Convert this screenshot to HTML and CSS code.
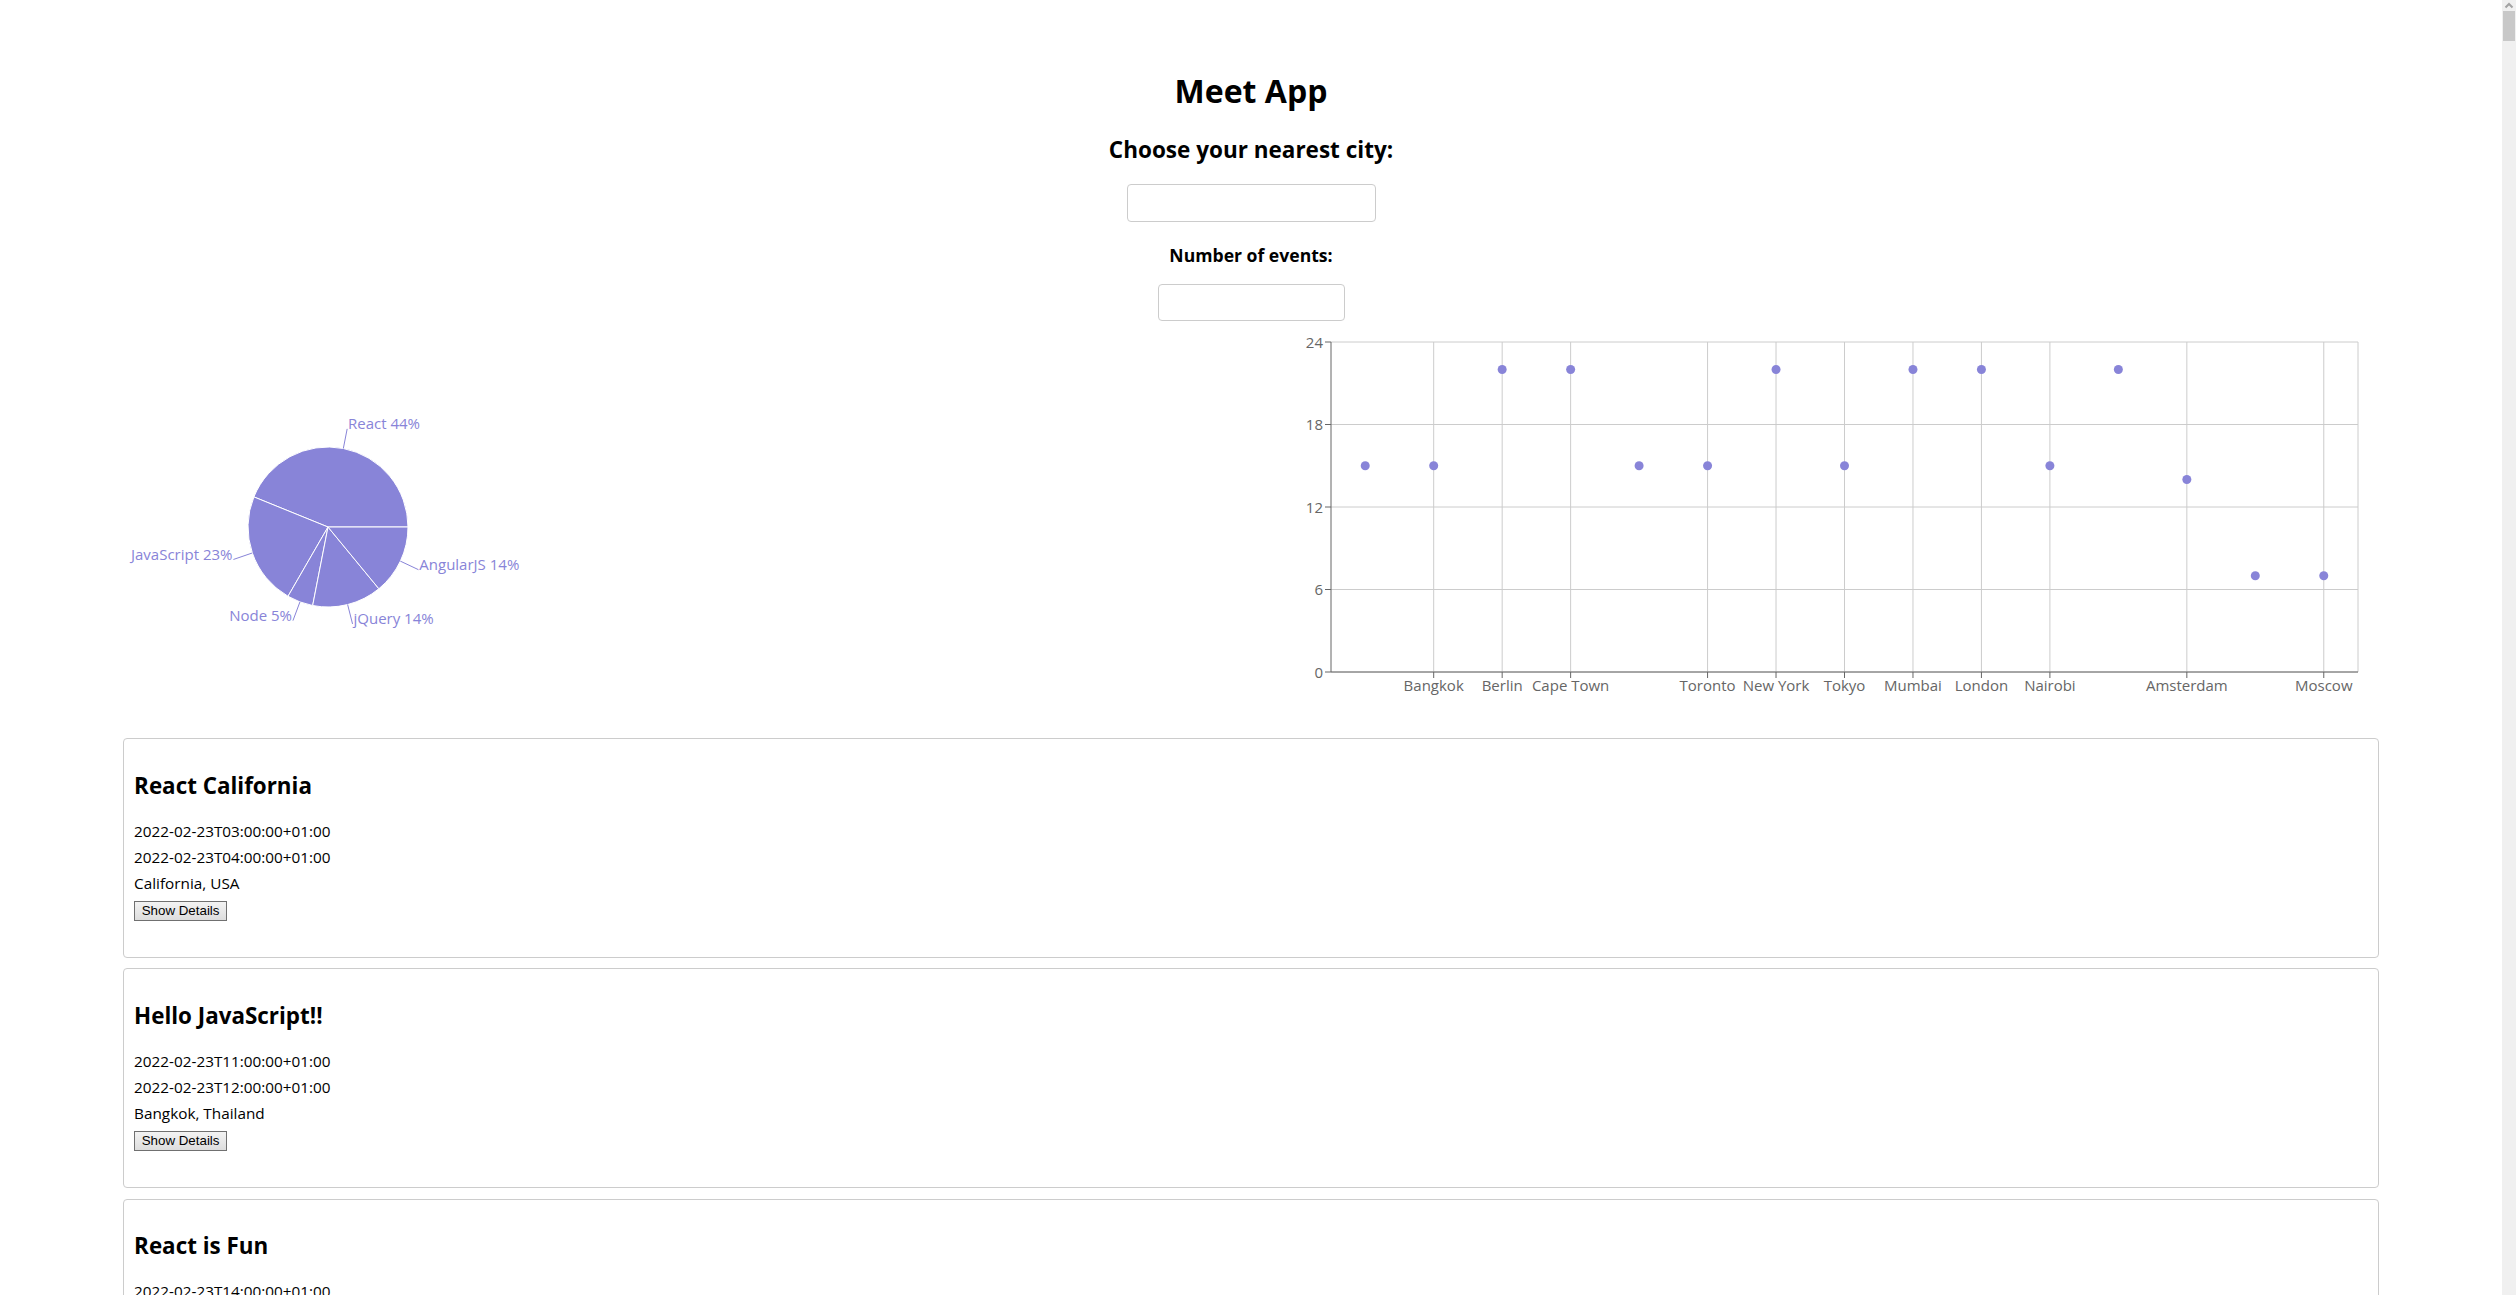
FILE: index.html
```
<!DOCTYPE html>
<html lang="en">
<head>
<meta charset="utf-8">
<title>Meet App</title>
<link rel="stylesheet" href="styles.css">
</head>
<body>
<div class="app">
  <h1 class="title">Meet App</h1>
  <div class="city-search">
    <h2 class="city-label">Choose your nearest city:</h2>
    <input class="city-input" type="text">
  </div>
  <div class="number-of-events">
    <h3 class="noe-label">Number of events:</h3>
    <input class="noe-input" type="text">
  </div>
  <div class="data-vis">
    <div class="pie-col">
      <svg class="pie" width="420" height="400" viewBox="0 0 420 400">
        <g class="slices">
          <path d="M205,205 L285,205 A80,80 0 0 0 130.88,174.90 Z"/>
          <path d="M205,205 L130.88,174.90 A80,80 0 0 0 165,274.28 Z"/>
          <path d="M205,205 L165,274.28 A80,80 0 0 0 189.66,283.52 Z"/>
          <path d="M205,205 L189.66,283.52 A80,80 0 0 0 255.86,266.75 Z"/>
          <path d="M205,205 L255.86,266.75 A80,80 0 0 0 285,205 Z"/>
        </g>
        <g class="label-lines">
          <line x1="220.34" y1="126.48" x2="224.17" y2="106.86"/>
          <line x1="129.33" y1="230.98" x2="110.42" y2="237.47"/>
          <line x1="176.95" y1="279.92" x2="169.94" y2="298.65"/>
          <line x1="224.64" y1="282.55" x2="229.55" y2="301.94"/>
          <line x1="277.35" y1="239.14" x2="295.44" y2="247.68"/>
        </g>
        <g class="pie-labels">
          <text x="225" y="106.9" text-anchor="start">React 44%</text>
          <text x="109.5" y="237.5" text-anchor="end">JavaScript 23%</text>
          <text x="169" y="298.7" text-anchor="end">Node 5%</text>
          <text x="230.5" y="301.9" text-anchor="start">jQuery 14%</text>
          <text x="296.3" y="247.7" text-anchor="start">AngularJS 14%</text>
        </g>
      </svg>
    </div>
    <div class="scatter-col">
      <svg class="scatter" width="1127" height="400" viewBox="0 0 1127 400">
        <g class="grid">
          <line x1="80" y1="20" x2="1107" y2="20"/>
          <line x1="80" y1="102.5" x2="1107" y2="102.5"/>
          <line x1="80" y1="185" x2="1107" y2="185"/>
          <line x1="80" y1="267.5" x2="1107" y2="267.5"/>
          <line x1="80" y1="350" x2="1107" y2="350"/>
          <line x1="182.7" y1="20" x2="182.7" y2="350"/>
          <line x1="251.17" y1="20" x2="251.17" y2="350"/>
          <line x1="319.63" y1="20" x2="319.63" y2="350"/>
          <line x1="456.57" y1="20" x2="456.57" y2="350"/>
          <line x1="525.03" y1="20" x2="525.03" y2="350"/>
          <line x1="593.5" y1="20" x2="593.5" y2="350"/>
          <line x1="661.97" y1="20" x2="661.97" y2="350"/>
          <line x1="730.43" y1="20" x2="730.43" y2="350"/>
          <line x1="798.9" y1="20" x2="798.9" y2="350"/>
          <line x1="935.83" y1="20" x2="935.83" y2="350"/>
          <line x1="1072.77" y1="20" x2="1072.77" y2="350"/>
          <line x1="1107" y1="20" x2="1107" y2="350"/>
        </g>
        <g class="axis">
          <line x1="80" y1="20" x2="80" y2="350"/>
          <line x1="80" y1="350" x2="1107" y2="350"/>
          <line x1="74" y1="350" x2="80" y2="350"/>
          <line x1="74" y1="267.5" x2="80" y2="267.5"/>
          <line x1="74" y1="185" x2="80" y2="185"/>
          <line x1="74" y1="102.5" x2="80" y2="102.5"/>
          <line x1="74" y1="20" x2="80" y2="20"/>
          <line x1="182.7" y1="350" x2="182.7" y2="356"/>
          <line x1="251.17" y1="350" x2="251.17" y2="356"/>
          <line x1="319.63" y1="350" x2="319.63" y2="356"/>
          <line x1="456.57" y1="350" x2="456.57" y2="356"/>
          <line x1="525.03" y1="350" x2="525.03" y2="356"/>
          <line x1="593.5" y1="350" x2="593.5" y2="356"/>
          <line x1="661.97" y1="350" x2="661.97" y2="356"/>
          <line x1="730.43" y1="350" x2="730.43" y2="356"/>
          <line x1="798.9" y1="350" x2="798.9" y2="356"/>
          <line x1="935.83" y1="350" x2="935.83" y2="356"/>
          <line x1="1072.77" y1="350" x2="1072.77" y2="356"/>
        </g>
        <g class="ticks-y">
          <text x="72" y="355.5">0</text>
          <text x="72" y="273">6</text>
          <text x="72" y="190.5">12</text>
          <text x="72" y="108">18</text>
          <text x="72" y="25.5">24</text>
        </g>
        <g class="ticks-x">
          <text x="182.7" y="368.5">Bangkok</text>
          <text x="251.17" y="368.5">Berlin</text>
          <text x="319.63" y="368.5">Cape Town</text>
          <text x="456.57" y="368.5">Toronto</text>
          <text x="525.03" y="368.5">New York</text>
          <text x="593.5" y="368.5">Tokyo</text>
          <text x="661.97" y="368.5">Mumbai</text>
          <text x="730.43" y="368.5">London</text>
          <text x="798.9" y="368.5">Nairobi</text>
          <text x="935.83" y="368.5">Amsterdam</text>
          <text x="1072.77" y="368.5">Moscow</text>
        </g>
        <g class="dots">
          <circle cx="114.23" cy="143.75" r="4.5"/>
          <circle cx="182.7" cy="143.75" r="4.5"/>
          <circle cx="251.17" cy="47.5" r="4.5"/>
          <circle cx="319.63" cy="47.5" r="4.5"/>
          <circle cx="388.1" cy="143.75" r="4.5"/>
          <circle cx="456.57" cy="143.75" r="4.5"/>
          <circle cx="525.03" cy="47.5" r="4.5"/>
          <circle cx="593.5" cy="143.75" r="4.5"/>
          <circle cx="661.97" cy="47.5" r="4.5"/>
          <circle cx="730.43" cy="47.5" r="4.5"/>
          <circle cx="798.9" cy="143.75" r="4.5"/>
          <circle cx="867.37" cy="47.5" r="4.5"/>
          <circle cx="935.83" cy="157.5" r="4.5"/>
          <circle cx="1004.3" cy="253.75" r="4.5"/>
          <circle cx="1072.77" cy="253.75" r="4.5"/>
        </g>
      </svg>
    </div>
  </div>
  <ul class="event-list">
    <li class="event">
      <h2 class="event-title">React California</h2>
      <p class="event-line first">2022-02-23T03:00:00+01:00</p>
      <p class="event-line">2022-02-23T04:00:00+01:00</p>
      <p class="event-line">California, USA</p>
      <button class="details-btn">Show Details</button>
    </li>
    <li class="event">
      <h2 class="event-title">Hello JavaScript!!</h2>
      <p class="event-line first">2022-02-23T11:00:00+01:00</p>
      <p class="event-line">2022-02-23T12:00:00+01:00</p>
      <p class="event-line">Bangkok, Thailand</p>
      <button class="details-btn">Show Details</button>
    </li>
    <li class="event">
      <h2 class="event-title">React is Fun</h2>
      <p class="event-line first">2022-02-23T14:00:00+01:00</p>
      <p class="event-line">2022-02-23T15:00:00+01:00</p>
      <p class="event-line">Berlin, Germany</p>
      <button class="details-btn">Show Details</button>
    </li>
    <li class="event">
      <h2 class="event-title">Learn Node.js</h2>
      <p class="event-line first">2022-02-24T09:00:00+01:00</p>
      <p class="event-line">2022-02-24T10:00:00+01:00</p>
      <p class="event-line">Cape Town, South Africa</p>
      <button class="details-btn">Show Details</button>
    </li>
  </ul>
</div>
<div class="scrollbar" aria-hidden="true">
  <div class="scroll-arrow">
    <svg width="14" height="11" viewBox="0 0 14 11"><path d="M3.5 7.5 L7 4 L10.5 7.5" fill="none" stroke="#a3a3a3" stroke-width="2"/></svg>
  </div>
  <div class="scroll-thumb"></div>
</div>
</body>
</html>
```
FILE: styles.css
```
html, body {
  margin: 0;
  padding: 0;
  background: #fff;
}

body {
  font-family: "Open Sans", "Noto Sans", sans-serif;
  color: #000;
  margin-right: 14px;
}

.app {
  text-align: center;
}

.title {
  font-size: 32px;
  line-height: 40px;
  font-weight: 700;
  margin: 71px 0 0;
}

.city-label {
  font-size: 22.5px;
  line-height: 30px;
  font-weight: 700;
  margin: 23.5px 0 0;
}

.city-input,
.noe-input {
  display: block;
  box-sizing: border-box;
  margin-left: auto;
  margin-right: auto;
  border: 1px solid #ccc;
  border-radius: 4px;
  background: #fff;
  padding: 0 8px;
  font-family: inherit;
  font-size: 16px;
  outline: none;
}

.city-input {
  width: 249px;
  height: 38px;
  margin-top: 19.5px;
}

.noe-label {
  font-size: 17.6px;
  line-height: 26px;
  font-weight: 700;
  margin: 19.7px 0 0;
}

.noe-input {
  width: 187px;
  height: 37px;
  margin-top: 16.3px;
}

.data-vis {
  display: grid;
  grid-template-columns: 1fr 1fr;
  width: calc(90% + 4px);
  height: 400px;
  margin: 1px auto 0;
}

.pie-col,
.scatter-col {
  text-align: left;
}

.pie,
.scatter {
  display: block;
  overflow: visible;
}

.slices path {
  fill: #8884d8;
  stroke: #fff;
  stroke-width: 1;
}

.label-lines line {
  stroke: #8884d8;
  stroke-width: 1;
}

.pie-labels text {
  fill: #8884d8;
  font-family: "Open Sans", sans-serif;
  font-size: 15px;
}

.grid line {
  stroke: #ccc;
  stroke-width: 1;
}

.axis line {
  stroke: #666;
  stroke-width: 1;
}

.ticks-y text,
.ticks-x text {
  fill: #666;
  font-family: "Open Sans", sans-serif;
  font-size: 15px;
}

.ticks-y text {
  text-anchor: end;
}

.ticks-x text {
  text-anchor: middle;
}

.dots circle {
  fill: #8884d8;
}

.event-list {
  list-style: none;
  padding: 0;
  margin: 16px auto 0;
  width: calc(90% + 4px);
  text-align: left;
}

.event {
  border: 1px solid #ccc;
  border-radius: 4px;
  padding: 0 10px 36.2px;
  margin-bottom: 10.5px;
}

.event-title {
  font-size: 22.4px;
  line-height: 32px;
  font-weight: 700;
  margin: 30.7px 0 0;
}

.event-line {
  font-size: 15.3px;
  line-height: 26px;
  margin: 0;
}

.event-line.first {
  margin-top: 15.9px;
}

.details-btn {
  display: block;
  margin-top: 5px;
  width: 93px;
  height: 20px;
  padding: 0;
  font-family: "Liberation Sans", Arial, sans-serif;
  font-size: 13.33px;
  color: #000;
  background: linear-gradient(#f3f3f3, #dddddd);
  border: 1px solid #707070;
  border-radius: 0;
}

.scrollbar {
  position: fixed;
  top: 0;
  right: 0;
  bottom: 0;
  width: 14px;
  background: #f0f0f0;
}

.scroll-arrow {
  height: 11px;
}

.scroll-arrow svg {
  display: block;
}

.scroll-thumb {
  height: 30px;
  margin: 0 1px;
  background: #c8c8c8;
}
```
